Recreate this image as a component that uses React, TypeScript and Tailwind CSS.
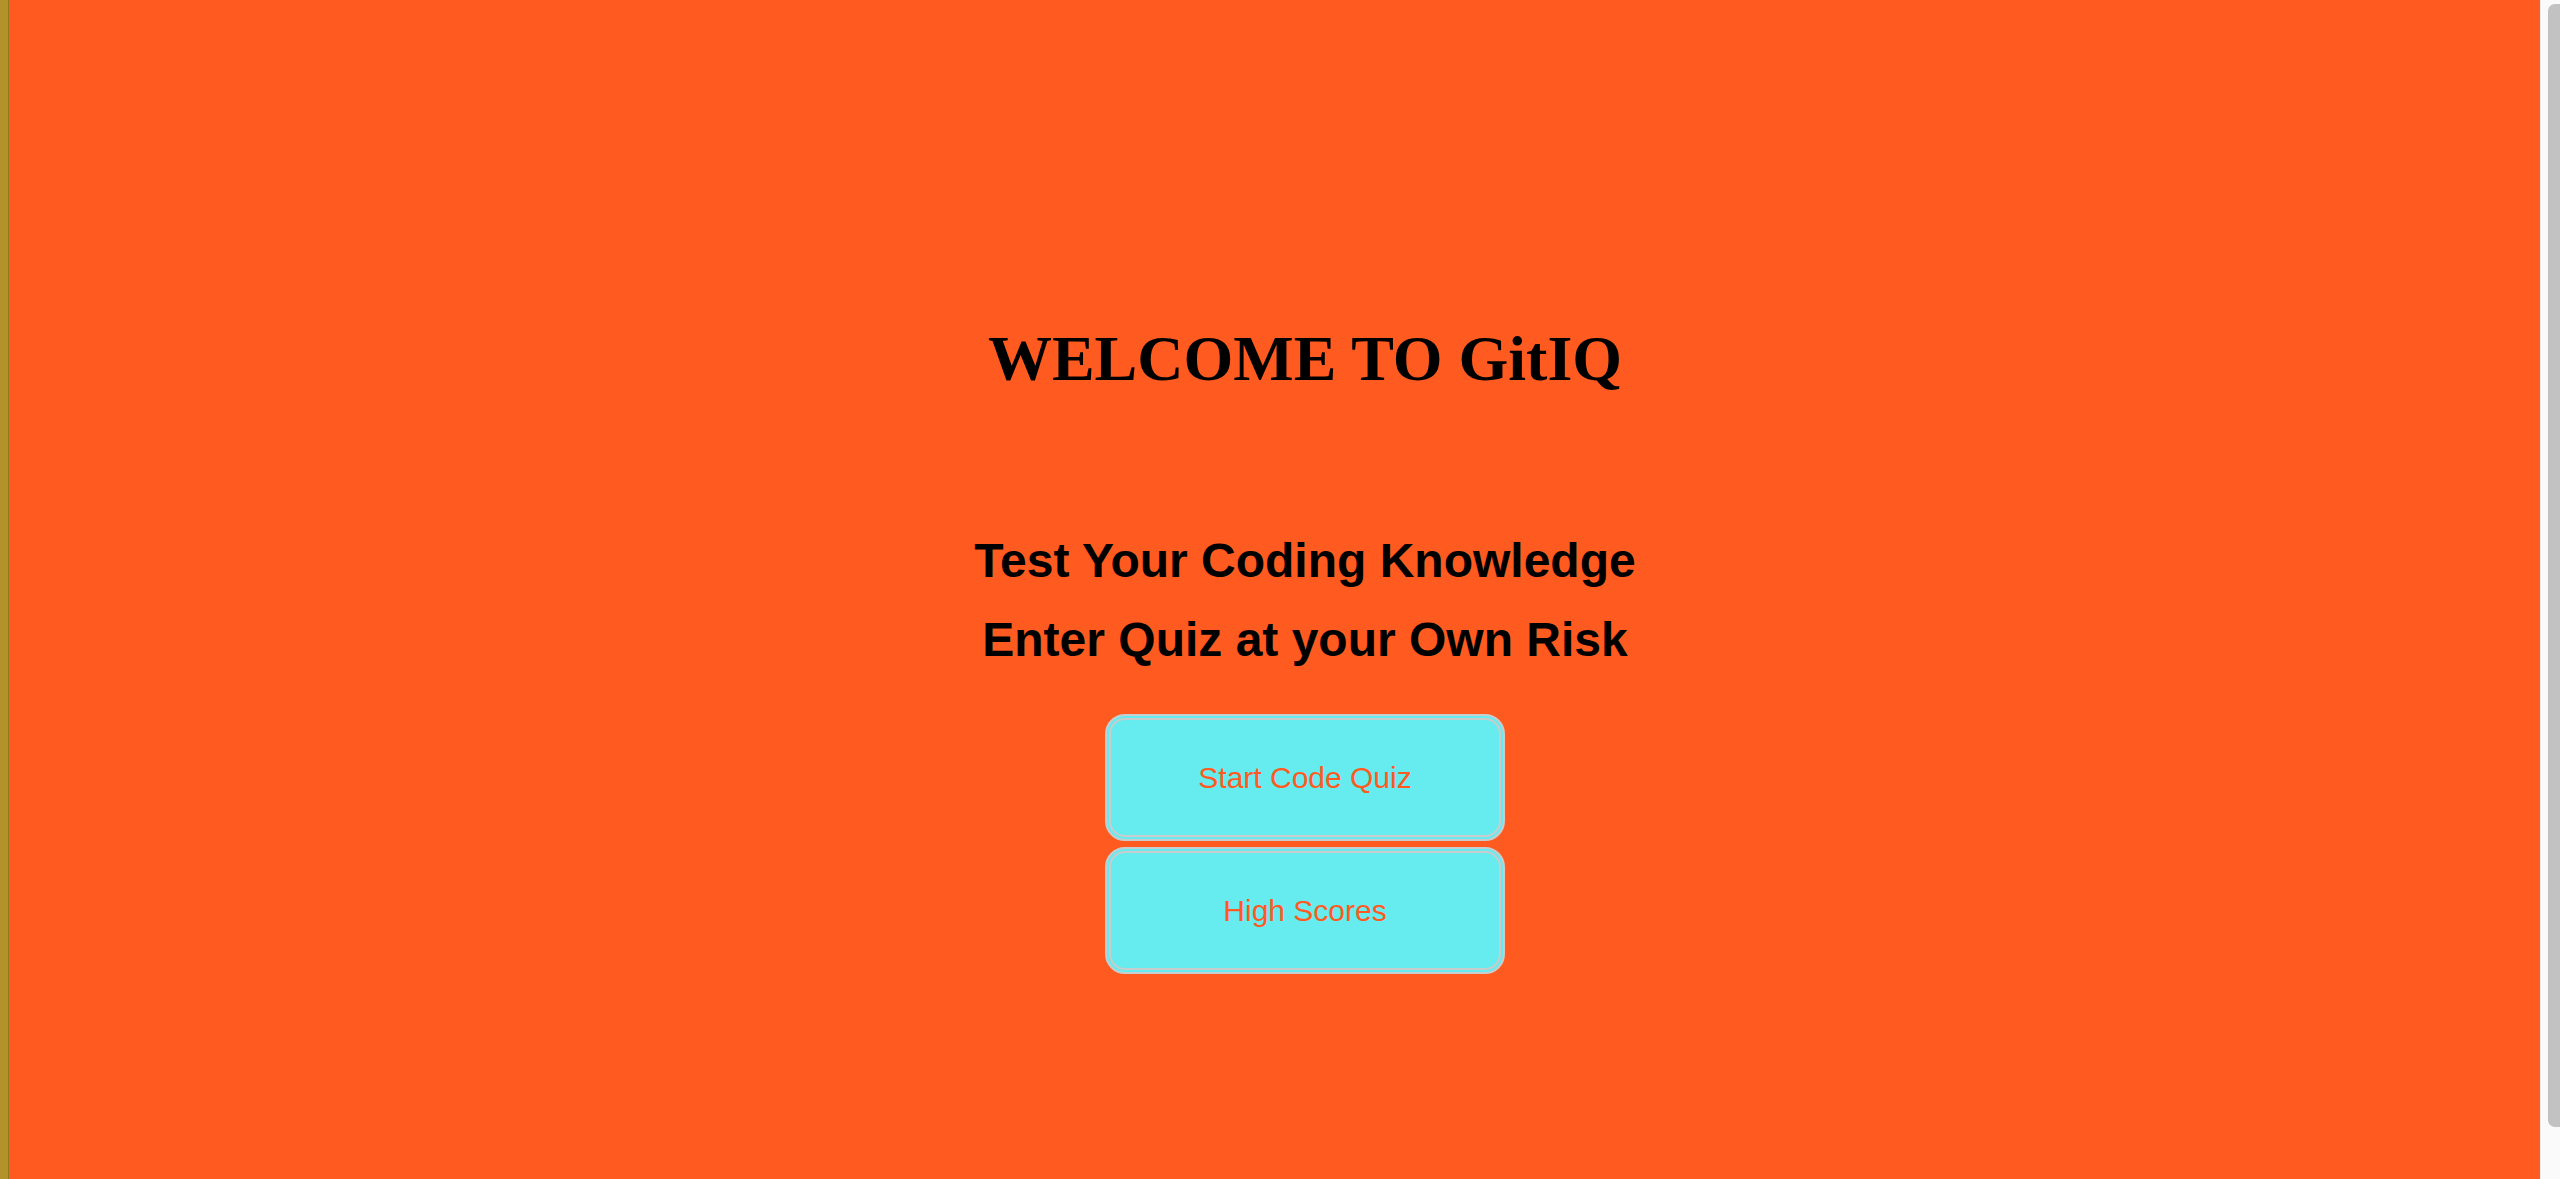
import React from "react";

export default function App() {
  return (
    <div className="flex h-[1179px] w-[2560px] overflow-hidden bg-[#ff5a1f]">
      {/* left strip */}
      <div className="flex h-full w-[9px] shrink-0">
        <div className="h-full w-[8px] bg-[#b3922a]" />
        <div className="h-full w-[1px] bg-[#8e7a1f]" />
      </div>

      {/* main */}
      <main className="flex h-full flex-1 flex-col items-center pl-[61px] font-['Liberation_Sans',Arial,sans-serif] text-black">
        <h1 className="mt-[327px] font-['Liberation_Serif','Times_New_Roman',serif] text-[64px] font-bold leading-[64px]">
          WELCOME TO GitIQ
        </h1>
        <h2 className="mt-[146px] text-[48px] font-bold leading-[48px]">
          Test Your Coding Knowledge
        </h2>
        <h2 className="mt-[31px] text-[48px] font-bold leading-[48px]">
          Enter Quiz at your Own Risk
        </h2>
        <div className="mt-[50px] flex flex-col gap-[6px]">
          <button className="flex h-[127px] w-[400px] items-center justify-center rounded-[20px] border-[6px] border-double border-[#c9cccc] bg-[#66ebee] text-[30px] text-[#ff5a1f]">
            Start Code Quiz
          </button>
          <button className="flex h-[127px] w-[400px] items-center justify-center rounded-[20px] border-[6px] border-double border-[#c9cccc] bg-[#66ebee] text-[30px] text-[#ff5a1f]">
            High Scores
          </button>
        </div>
      </main>

      {/* scrollbar */}
      <div className="flex h-full w-[20px] shrink-0 border-l border-[#ebebeb] bg-[#fafafa] pb-[52px] pl-[7px] pt-[4px]">
        <div className="h-full w-full rounded-l-[7px] bg-[#c2c2c2]" />
      </div>
    </div>
  );
}
